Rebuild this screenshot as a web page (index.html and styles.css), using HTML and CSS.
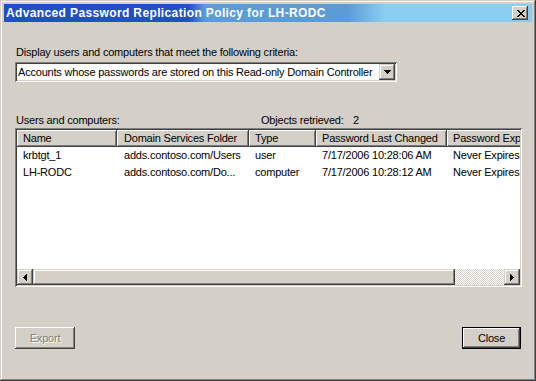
FILE: index.html
```html
<!DOCTYPE html>
<html>
<head>
<meta charset="utf-8">
<title>Advanced Password Replication Policy for LH-RODC</title>
<link rel="stylesheet" href="styles.css">
</head>
<body>
<div class="window">
  <div class="titlebar">
    <span class="title">Advanced Password Replication Policy for LH-RODC</span>
    <span class="xbtn">
      <svg width="8" height="7" viewBox="0 0 8 7" shape-rendering="crispEdges">
        <path d="M0 0h2v1h-2z M6 0h2v1h-2z M1 1h2v1h-2z M5 1h2v1h-2z M2 2h4v1h-4z M3 3h2v1h-2z M2 4h4v1h-4z M1 5h2v1h-2z M5 5h2v1h-2z M0 6h2v1h-2z M6 6h2v1h-2z" fill="#000"/>
      </svg>
    </span>
  </div>
  <div class="client">
    <div class="label">Display users and computers that meet the following criteria:</div>
    <div class="combo">
      <span class="combo-text">Accounts whose passwords are stored on this Read-only Domain Controller</span>
      <span class="ddbtn">
        <svg width="7" height="4" viewBox="0 0 7 4" shape-rendering="crispEdges">
          <path d="M0 0h7v1h-7z M1 1h5v1h-5z M2 2h3v1h-3z M3 3h1v1h-1z" fill="#000"/>
        </svg>
      </span>
    </div>
    <div class="listlabel">
      <span class="ll-name">Users and computers:</span>
      <span class="ll-count">Objects retrieved:</span>
      <span>2</span>
    </div>
    <div class="listview">
      <div class="lv-inner">
        <div class="hrow">
          <div class="hcell c1">Name</div>
          <div class="hcell c2">Domain Services Folder</div>
          <div class="hcell c3">Type</div>
          <div class="hcell c4">Password Last Changed</div>
          <div class="hcell c5">Password Expires</div>
        </div>
        <div class="row">
          <div class="cell c1">krbtgt_1</div>
          <div class="cell c2">adds.contoso.com/Users</div>
          <div class="cell c3">user</div>
          <div class="cell c4">7/17/2006 10:28:06 AM</div>
          <div class="cell c5">Never Expires</div>
        </div>
        <div class="row">
          <div class="cell c1">LH-RODC</div>
          <div class="cell c2">adds.contoso.com/Do...</div>
          <div class="cell c3">computer</div>
          <div class="cell c4">7/17/2006 10:28:12 AM</div>
          <div class="cell c5">Never Expires</div>
        </div>
        <div class="spacer"></div>
        <div class="hscroll">
          <span class="sbtn">
            <svg width="4" height="7" viewBox="0 0 4 7" shape-rendering="crispEdges">
              <path d="M3 0h1v7h-1z M2 1h1v5h-1z M1 2h1v3h-1z M0 3h1v1h-1z" fill="#000"/>
            </svg>
          </span>
          <span class="thumb"></span>
          <span class="track"></span>
          <span class="sbtn">
            <svg width="4" height="7" viewBox="0 0 4 7" shape-rendering="crispEdges">
              <path d="M0 0h1v7h-1z M1 1h1v5h-1z M2 2h1v3h-1z M3 3h1v1h-1z" fill="#000"/>
            </svg>
          </span>
        </div>
      </div>
    </div>
    <div class="buttons">
      <span class="btn disabled">Export</span>
      <span class="btn default">Close</span>
    </div>
  </div>
</div>
</body>
</html>
```
FILE: styles.css
```css
* { box-sizing: border-box; }
html, body { margin: 0; padding: 0; }
body {
  background: #d4d0c8;
  font-family: "Liberation Sans", Arial, sans-serif;
  font-size: 11px;
  letter-spacing: -0.2px;
  color: #000;
}
.window {
  width: 536px;
  height: 381px;
  display: flex;
  flex-direction: column;
  padding: 4px;
  background: #d4d0c8;
  box-shadow: inset -1px -1px #404040, inset 1px 1px #d4d0c8, inset -2px -2px #808080, inset 2px 2px #fff;
}
.titlebar {
  height: 18px;
  flex: none;
  display: flex;
  align-items: center;
  padding: 0 2px 0 2px;
  color: #fff;
  background: linear-gradient(to right, #1f50c6 0, #1f50c6 35%, #5a9bd8 38%, #5a9bd8 65%, #88cef2 72%, #88cef2 100%);
}
.title {
  flex: 1;
  font-size: 12px;
  font-weight: bold;
  letter-spacing: 0.37px;
  white-space: nowrap;
}
.xbtn {
  width: 16px;
  height: 14px;
  margin-right: 2px;
  display: flex;
  align-items: center;
  justify-content: center;
  padding-left: 1px;
  background: #d4d0c8;
  box-shadow: inset -1px -1px #404040, inset 1px 1px #fff, inset -2px -2px #808080;
}
.xbtn svg, .ddbtn svg, .sbtn svg { display: block; }
.client {
  flex: 1;
  display: flex;
  flex-direction: column;
  padding: 24px 11px 0 11px;
}
.label {
  height: 13px;
  line-height: 13px;
  padding-left: 1px;
}
.combo {
  margin-top: 3px;
  width: 382px;
  height: 20px;
  padding: 2px;
  display: flex;
  background: #fff;
  box-shadow: inset 1px 1px #808080, inset -1px -1px #fff, inset 2px 2px #404040, inset -2px -2px #d4d0c8;
}
.combo-text {
  flex: 1;
  line-height: 16px;
  padding-left: 1px;
  white-space: nowrap;
  overflow: hidden;
}
.ddbtn {
  width: 16px;
  height: 16px;
  display: flex;
  align-items: center;
  justify-content: center;
  padding-left: 1px;
  background: #d4d0c8;
  box-shadow: inset -1px -1px #404040, inset 1px 1px #d4d0c8, inset -2px -2px #808080, inset 2px 2px #fff;
}
.listlabel {
  margin-top: 32px;
  height: 13px;
  line-height: 13px;
  display: flex;
  padding-left: 1px;
  white-space: nowrap;
}
.ll-name { width: 245px; }
.ll-count { width: 92px; }
.listview {
  margin-top: 1px;
  width: 507px;
  height: 159px;
  padding: 2px;
  background: #fff;
  box-shadow: inset 1px 1px #808080, inset -1px -1px #fff, inset 2px 2px #404040, inset -2px -2px #d4d0c8;
}
.lv-inner {
  height: 100%;
  display: flex;
  flex-direction: column;
  overflow: hidden;
}
.hrow, .row {
  display: flex;
  flex: none;
  height: 17px;
  line-height: 17px;
  white-space: nowrap;
}
.hcell, .cell {
  flex: none;
  overflow: hidden;
  padding-left: 6px;
}
.hcell {
  background: #d4d0c8;
  box-shadow: inset -1px -1px #404040, inset 1px 1px #fff, inset -2px -2px #808080;
}
.c1 { width: 100px; }
.c2 { width: 132px; padding-left: 7px; }
.c3 { width: 67px; }
.c4 { width: 131px; }
.c5 { width: 120px; padding-left: 6px; }
.spacer { flex: 1; }
.hscroll {
  display: flex;
  flex: none;
  height: 16px;
}
.sbtn {
  width: 16px;
  height: 16px;
  flex: none;
  display: flex;
  align-items: center;
  justify-content: center;
  background: #d4d0c8;
  box-shadow: inset -1px -1px #404040, inset 1px 1px #d4d0c8, inset -2px -2px #808080, inset 2px 2px #fff;
}
.thumb {
  width: 422px;
  flex: none;
  background: #d4d0c8;
  box-shadow: inset -1px -1px #404040, inset 1px 1px #d4d0c8, inset -2px -2px #808080, inset 2px 2px #fff;
}
.track {
  flex: 1;
  background: repeating-conic-gradient(#fff 0 25%, #d4d0c8 0 50%) 0 0 / 2px 2px;
}
.buttons {
  margin-top: 40px;
  display: flex;
  justify-content: space-between;
}
.btn {
  width: 60px;
  height: 22px;
  line-height: 22px;
  text-align: center;
  background: #d4d0c8;
  box-shadow: inset -1px -1px #404040, inset 1px 1px #fff, inset -2px -2px #808080;
}
.btn.default {
  width: 59px;
  box-shadow: inset 0 0 0 1px #000, inset -2px -2px #404040, inset 2px 2px #fff, inset -3px -3px #808080;
}
.btn.disabled {
  color: #808080;
  text-shadow: 1px 1px #fff;
}
```
